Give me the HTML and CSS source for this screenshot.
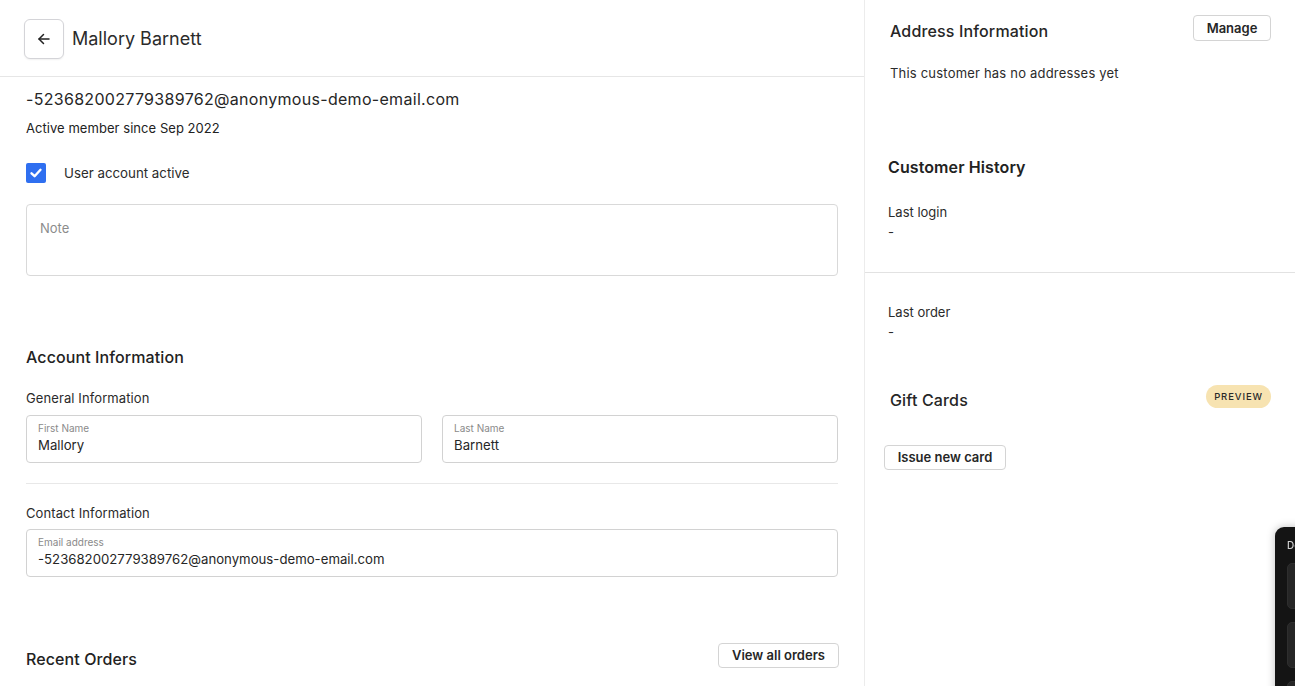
FILE: index.html
```html
<!DOCTYPE html>
<html lang="en">
<head>
<meta charset="utf-8">
<title>Mallory Barnett</title>
<link rel="stylesheet" href="styles.css">
</head>
<body>
<div class="page">
  <main class="main">
    <header class="topbar">
      <button class="back" aria-label="Back">
        <svg width="16" height="16" viewBox="0 0 16 16" fill="none" stroke="#222" stroke-width="1.5" stroke-linecap="round" stroke-linejoin="round"><path d="M13 8H3"/><path d="M7.5 3.5 3 8l4.5 4.5"/></svg>
      </button>
      <h1 class="title">Mallory Barnett</h1>
    </header>
    <div class="content">
      <div class="email">-523682002779389762@anonymous-demo-email.com</div>
      <div class="since">Active member since Sep 2022</div>
      <label class="check-row">
        <span class="checkbox">
          <svg width="14" height="14" viewBox="0 0 14 14" fill="none" stroke="#fff" stroke-width="2.4" stroke-linecap="round" stroke-linejoin="round"><path d="M2.5 7.3 5.6 10.2 11.5 3.8"/></svg>
        </span>
        <span class="check-label">User account active</span>
      </label>
      <div class="note">Note</div>

      <h2 class="section-title">Account Information</h2>
      <div class="sub-title">General Information</div>
      <div class="two-col">
        <div class="field"><div class="field-label">First Name</div><div class="field-value">Mallory</div></div>
        <div class="field"><div class="field-label">Last Name</div><div class="field-value">Barnett</div></div>
      </div>
      <hr class="divider">
      <div class="sub-title contact">Contact Information</div>
      <div class="field"><div class="field-label">Email address</div><div class="field-value">-523682002779389762@anonymous-demo-email.com</div></div>

      <div class="orders-row">
        <h2 class="section-title orders-title">Recent Orders</h2>
        <button class="btn btn-orders">View all orders</button>
      </div>
    </div>
  </main>

  <aside class="side">
    <div class="side-block">
      <div class="side-head">
        <h2 class="side-title">Address Information</h2>
        <button class="btn btn-manage">Manage</button>
      </div>
      <p class="muted-line">This customer has no addresses yet</p>
      <h2 class="history-title">Customer History</h2>
      <div class="kv">
        <div class="kv-label">Last login</div>
        <div class="kv-value">-</div>
      </div>
    </div>
    <hr class="side-divider">
    <div class="side-block">
      <div class="kv kv-order">
        <div class="kv-label">Last order</div>
        <div class="kv-value">-</div>
      </div>
      <div class="gift-head">
        <h2 class="side-title gift-title">Gift Cards</h2>
        <span class="badge">PREVIEW</span>
      </div>
      <button class="btn btn-issue">Issue new card</button>
    </div>
  </aside>
</div>

<div class="dev-panel">
  <div class="dev-label">Dev</div>
  <div class="dev-box"></div>
  <div class="dev-box"></div>
  <div class="dev-box"></div>
</div>
</body>
</html>
```

FILE: styles.css
```css
* { box-sizing: border-box; }

html, body {
  margin: 0;
  padding: 0;
  background: #fff;
  font-family: Inter, "Noto Sans", "Liberation Sans", sans-serif;
  color: #262626;
  overflow: hidden;
}

.page {
  display: grid;
  grid-template-columns: 865px 1fr;
  height: 686px;
}

.main {
  border-right: 1px solid #ececec;
}

.topbar {
  height: 77px;
  display: flex;
  align-items: center;
  gap: 8px;
  padding: 0 24px;
  border-bottom: 1px solid #e6e6e6;
}

.back {
  width: 40px;
  height: 40px;
  display: flex;
  align-items: center;
  justify-content: center;
  background: #fff;
  border: 1px solid #d4d4d8;
  border-radius: 6px;
  padding: 0;
  box-shadow: 0 1px 2px rgba(0,0,0,0.06);
  margin-top: 1px;
}

.title {
  margin: 0;
  font-size: 18px;
  font-weight: 400;
  color: #2b2b2b;
  line-height: 24px;
  margin-top: 1px;
}

.content {
  padding: 0 26px 0 26px;
}

.email {
  margin-top: 10px;
  font-size: 16px;
  line-height: 24px;
  letter-spacing: 0.3px;
  color: #262626;
}

.since {
  margin-top: 7px;
  font-size: 13px;
  line-height: 20px;
  letter-spacing: 0.05px;
  color: #222;
}

.check-row {
  margin-top: 25px;
  display: flex;
  align-items: center;
  gap: 18px;
  height: 20px;
}

.checkbox {
  width: 20px;
  height: 20px;
  background: #2f6ff0;
  border-radius: 2px;
  display: flex;
  align-items: center;
  justify-content: center;
}

.check-label {
  font-size: 13.3px;
  color: #2b2b2b;
}

.note {
  margin-top: 21px;
  height: 72px;
  border: 1px solid #d9d9d9;
  border-radius: 4px;
  padding: 13px 13px;
  font-size: 13px;
  line-height: 20px;
  color: #8c8c8c;
}

.section-title {
  margin: 69px 0 0;
  font-size: 16px;
  font-weight: 500;
  line-height: 24px;
  letter-spacing: 0.1px;
  color: #222;
}

.sub-title {
  margin-top: 19px;
  font-size: 13px;
  line-height: 20px;
  letter-spacing: 0.1px;
  color: #2b2b2b;
}

.two-col {
  margin-top: 7px;
  display: grid;
  grid-template-columns: 1fr 1fr;
  gap: 20px;
}

.field {
  height: 48px;
  border: 1px solid #d2d2d2;
  border-radius: 4px;
  padding: 5px 11px 0;
}

.sub-title.contact + .field {
  margin-top: 6px;
}

.field-label {
  font-size: 10px;
  line-height: 14px;
  color: #8a8a8a;
}

.field-value {
  margin-top: 1px;
  font-size: 13.2px;
  line-height: 18px;
  color: #262626;
}

.divider {
  margin: 20px 0 0;
  border: 0;
  border-top: 1px solid #e8e8e8;
  height: 0;
}

.orders-row {
  margin-top: 66px;
  display: flex;
  justify-content: space-between;
  align-items: flex-start;
}

.orders-title {
  margin: 4px 0 0;
}

.btn {
  font-family: inherit;
  font-size: 13px;
  font-weight: 600;
  color: #262626;
  background: #fff;
  border: 1px solid #d4d4d4;
  border-radius: 4px;
  height: 25px;
  padding: 0;
  line-height: 23px;
}

.btn-orders {
  width: 121px;
  margin-right: -1px;
}

/* sidebar */
.side {
  padding: 0 24px 0 25px;
}

.side-block {
  display: flex;
  flex-direction: column;
}

.side-head {
  padding-top: 15px;
  display: flex;
  justify-content: space-between;
  align-items: flex-start;
}

.side-title {
  margin: 4px 0 0;
  font-size: 16px;
  font-weight: 500;
  line-height: 24px;
  letter-spacing: 0.15px;
  color: #262626;
}

.btn-manage {
  height: 26px;
  width: 78px;
}

.muted-line {
  margin: 20px 0 0;
  font-size: 13px;
  line-height: 20px;
  letter-spacing: 0.2px;
  color: #2b2b2b;
}

.history-title {
  margin: 72px 0 0 -2px;
  font-size: 16px;
  font-weight: 600;
  line-height: 24px;
  letter-spacing: 0.1px;
  color: #222;
}

.kv {
  margin: 23px 0 0 -2px;
}

.kv-label, .kv-value {
  font-size: 13px;
  line-height: 20px;
  color: #2b2b2b;
}

.side-divider {
  margin: 30px -24px 0 -25px;
  border: 0;
  border-top: 1px solid #e2e2e2;
  height: 0;
}

.kv-order {
  margin-top: 29px;
}

.gift-head {
  margin-top: 43px;
  display: flex;
  justify-content: space-between;
  align-items: flex-start;
}

.gift-title {
  margin-top: 3px;
}

.badge {
  height: 23px;
  padding: 0 8px;
  border-radius: 12px;
  background: #f7e3b1;
  color: #2a2a2a;
  font-size: 9.5px;
  font-weight: 500;
  letter-spacing: 0.9px;
  line-height: 23px;
}

.btn-issue {
  margin: 33px 0 0 -6px;
  align-self: flex-start;
  width: 122px;
}

/* floating dev panel */
.dev-panel {
  position: fixed;
  left: 1275px;
  top: 527px;
  width: 260px;
  height: 220px;
  background: #141414;
  border-radius: 9px;
  box-shadow: 0 0 8px rgba(0,0,0,0.25);
  padding: 10px 0 0 12px;
}

.dev-label {
  font-size: 10px;
  line-height: 16px;
  color: #d0d0d0;
  font-weight: 500;
}

.dev-box {
  margin-top: 10px;
  height: 46px;
  border-radius: 5px;
  background: #262626;
  border: 1px solid #2e2e2e;
}

.dev-box + .dev-box {
  margin-top: 13px;
}
```
